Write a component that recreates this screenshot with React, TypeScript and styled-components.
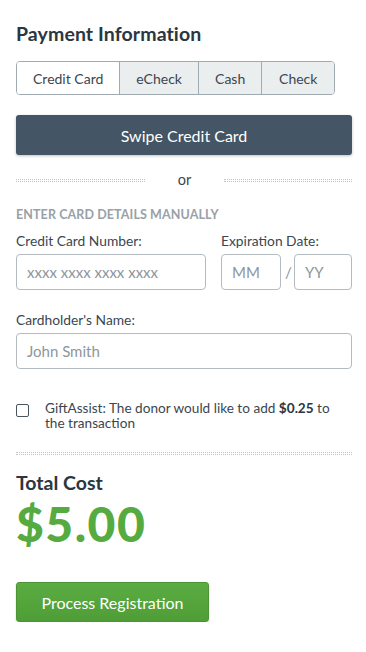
import { useState } from "react";
import styled, { createGlobalStyle } from "styled-components";

const GlobalStyle = createGlobalStyle`
  body {
    margin: 0;
    background: #ffffff;
    font-family: Lato, "Open Sans", Arial, sans-serif;
    color: #2f3b45;
  }
`;

const Page = styled.div`
  width: 366px;
  padding: 22px 14px 0 16px;
  box-sizing: border-box;
`;

const Title = styled.h2`
  margin: 0;
  font-size: 19.5px;
  font-weight: 700;
  line-height: 24px;
  color: #2b3640;
  letter-spacing: 0.1px;
`;

const Tabs = styled.div`
  margin-top: 15px;
  display: flex;
  width: 319px;
  height: 34px;
  border: 1px solid #a0aab1;
  border-radius: 4px;
  overflow: hidden;
  box-sizing: border-box;
`;

const Tab = styled.button<{ $active?: boolean; $w: number }>`
  width: ${({ $w }) => $w}px;
  border: 0;
  border-left: 1px solid #a0aab1;
  background: ${({ $active }) => ($active ? "#ffffff" : "#ebeeef")};
  font-family: inherit;
  font-size: 14px;
  color: #3b4650;
  padding: 0;
  cursor: pointer;

  &:first-child {
    border-left: 0;
  }
`;

const SwipeButton = styled.button`
  margin-top: 20px;
  width: 336px;
  height: 40px;
  border: 0;
  border-radius: 3px;
  background: #445565;
  color: #ffffff;
  font-family: inherit;
  font-size: 16px;
  box-shadow: 0 1px 3px rgba(0, 0, 0, 0.25);
`;

const OrRow = styled.div`
  margin-top: 16px;
  display: flex;
  align-items: center;
  width: 336px;
`;

const Dots = styled.div<{ $width?: number }>`
  ${({ $width }) => ($width ? `width: ${$width}px;` : "flex: 1;")}
  height: 1px;
  border-top: 1px dotted #bfc5ca;
  border-bottom: 1px dotted #bfc5ca;
`;

const OrText = styled.span`
  width: 79px;
  text-align: center;
  font-size: 14.5px;
  color: #3b4650;
  line-height: 18px;
`;

const SectionLabel = styled.div`
  margin-top: 18px;
  font-size: 12.5px;
  font-weight: 700;
  color: #98a1a8;
  letter-spacing: 0.1px;
`;

const FieldRow = styled.div`
  margin-top: 10px;
  display: flex;
  gap: 15px;
`;

const Field = styled.div`
  display: flex;
  flex-direction: column;
  gap: 5px;
`;

const Label = styled.label`
  font-size: 13.8px;
  color: #3b4650;
  line-height: 17px;
`;

const Input = styled.input<{ $w: number }>`
  width: ${({ $w }) => $w}px;
  height: 36px;
  box-sizing: border-box;
  border: 1px solid #b4bcc2;
  border-radius: 4px;
  padding: 0 10px;
  font-family: inherit;
  font-size: 15px;
  color: #3b4650;

  &::placeholder {
    color: #8d969c;
  }
`;

const ExpRow = styled.div`
  display: flex;
  align-items: center;
  gap: 4px;
`;

const Slash = styled.span`
  font-size: 15px;
  color: #8d969c;
  width: 5px;
  text-align: center;
`;

const NameField = styled(Field)`
  margin-top: 21px;
`;

const CheckRow = styled.label`
  margin-top: 32px;
  display: flex;
  gap: 16px;
  align-items: flex-start;
  width: 336px;
`;

const Box = styled.span`
  flex: none;
  width: 11px;
  height: 11px;
  margin-top: 3px;
  border: 1px solid #4a545c;
  border-radius: 2px;
`;

const CheckText = styled.span`
  font-size: 13.6px;
  line-height: 15px;
  color: #3b4650;

  b {
    color: #2b3640;
  }
`;

const Divider = styled(Dots)`
  margin-top: 21px;
  width: 336px;
`;

const TotalLabel = styled.div`
  margin-top: 16px;
  font-size: 19.5px;
  font-weight: 700;
  color: #2b3640;
  line-height: 24px;
`;

const Amount = styled.div`
  margin-top: 3px;
  font-size: 48px;
  font-weight: 900;
  color: #55ab40;
  line-height: 52px;
  letter-spacing: 1.5px;
`;

const ProcessButton = styled.button`
  margin-top: 32px;
  width: 193px;
  height: 40px;
  border: 1px solid #4c9436;
  border-radius: 3px;
  background: linear-gradient(180deg, #5aad41 0%, #4f9d37 100%);
  color: #ffffff;
  font-family: inherit;
  font-size: 16px;
  box-shadow: 0 1px 2px rgba(0, 0, 0, 0.2);
`;

const tabs = [
  { label: "Credit Card", w: 103 },
  { label: "eCheck", w: 79 },
  { label: "Cash", w: 64 },
  { label: "Check", w: 73 },
];

export default function App() {
  const [active, setActive] = useState(0);

  return (
    <>
      <GlobalStyle />
      <Page>
        <Title>Payment Information</Title>
        <Tabs>
          {tabs.map((t, i) => (
            <Tab key={t.label} $w={t.w} $active={i === active} onClick={() => setActive(i)}>
              {t.label}
            </Tab>
          ))}
        </Tabs>
        <SwipeButton>Swipe Credit Card</SwipeButton>
        <OrRow>
          <Dots $width={129} />
          <OrText>or</OrText>
          <Dots />
        </OrRow>
        <SectionLabel>ENTER CARD DETAILS MANUALLY</SectionLabel>
        <FieldRow>
          <Field>
            <Label>Credit Card Number:</Label>
            <Input $w={190} placeholder="xxxx xxxx xxxx xxxx" />
          </Field>
          <Field>
            <Label>Expiration Date:</Label>
            <ExpRow>
              <Input $w={60} placeholder="MM" />
              <Slash>/</Slash>
              <Input $w={58} placeholder="YY" />
            </ExpRow>
          </Field>
        </FieldRow>
        <NameField>
          <Label>Cardholder's Name:</Label>
          <Input $w={336} placeholder="John Smith" />
        </NameField>
        <CheckRow>
          <Box />
          <CheckText>
            GiftAssist: The donor would like to add <b>$0.25</b> to the transaction
          </CheckText>
        </CheckRow>
        <Divider />
        <TotalLabel>Total Cost</TotalLabel>
        <Amount>$5.00</Amount>
        <ProcessButton>Process Registration</ProcessButton>
      </Page>
    </>
  );
}
